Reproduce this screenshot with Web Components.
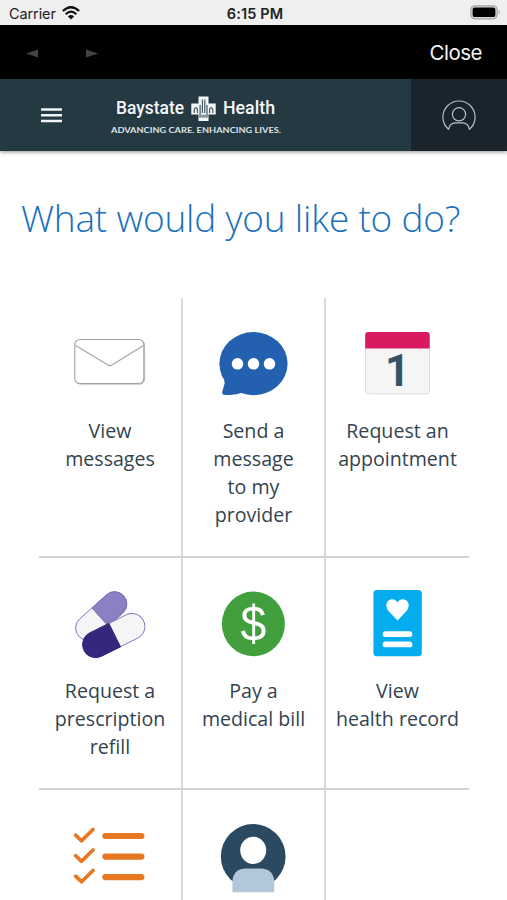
<!DOCTYPE html>
<html lang="en">
<head>
<meta charset="utf-8">
<meta name="viewport" content="width=device-width, initial-scale=1">
<title>Baystate Health</title>
<style>
    html {
        overflow: hidden;
    }

    body {
        margin: 0;
        height: 900px;
        overflow: hidden;
        background: #fff;
        color: #33434f;
        font-family: "Open Sans", sans-serif;
    }
</style>
</head>
<body>
<status-bar></status-bar>
<browser-bar>Close</browser-bar>
<site-header></site-header>
<page-title>What would you like to do?</page-title>
<action-grid>
    <action-tile>
        <svg slot="icon" viewBox="0 0 80 72" fill="#fff" stroke="#a3a3a3" stroke-width="1.1">
            <rect x="5.6" y="12.2" width="69" height="44" rx="5" stroke="#c4c4c4"/>
            <rect x="4.8" y="11.5" width="69" height="44" rx="5"/>
            <path d="M5.5 17.5 38.5 37.2Q40 38.1 41.5 37.2L73.6 17.5" fill="none"/>
        </svg>
        View<br>messages
    </action-tile>
    <action-tile>
        <svg slot="icon" viewBox="0.8 0 80 72" fill="#2361b0">
            <ellipse cx="40.3" cy="35.6" rx="34.1" ry="31.6"/>
            <path d="M8 47Q12.5 52 11 57L9 64Q8.6 67 12 67Q22 67 29 64.4L36 66 30 45Z"/>
            <g fill="#fff">
                <circle cx="24.3" cy="35.8" r="5.8"/>
                <circle cx="40.3" cy="35.8" r="5.8"/>
                <circle cx="56.3" cy="35.8" r="5.8"/>
            </g>
        </svg>
        Send a<br>message<br>to my<br>provider
    </action-tile>
    <action-tile>
        <svg slot="icon" viewBox="0.8 0 80 72">
            <rect x="8.3" y="4.5" width="64" height="61.3" rx="3" fill="#f5f5f5" stroke="#dcdcdc"/>
            <path d="M8 20.6V7Q8 4 11 4H69.5Q72.5 4 72.5 7V20.6Z" fill="#da1a60"/>
            <text x="40.4" y="58.2" text-anchor="middle" font-family="Roboto, sans-serif" font-weight="700" font-size="43.5" fill="#34536b">1</text>
        </svg>
        Request an<br>appointment
    </action-tile>
    <action-tile>
        <svg slot="icon" viewBox="0 0 80 72">
            <g transform="translate(31.2 28) rotate(-42)" stroke="#7d70b8" stroke-width=".9">
                <rect x="-30.2" y="-12.2" width="60.4" height="24.4" rx="12.2" fill="#f5f5f7"/>
                <path d="M-1.5-12.2H18A12.2 12.2 0 0 1 18 12.2H-1.5Z" fill="#8a81c5"/>
            </g>
            <g transform="translate(43.8 47.5) rotate(-26.5)" stroke="#7d70b8" stroke-width=".9">
                <rect x="-33.2" y="-13" width="66.4" height="26" rx="13" fill="#f5f5f7"/>
                <path d="M1-13H-20.2A13 13 0 0 0-20.2 13H1Z" fill="#34277d" stroke="#34277d"/>
            </g>
        </svg>
        Request a<br>prescription<br>refill
    </action-tile>
    <action-tile>
        <svg slot="icon" viewBox="0.8 0 80 72">
            <ellipse cx="40.2" cy="35.9" rx="31.5" ry="32.4" fill="#41a03d"/>
            <text transform="translate(40.3 52.6) scale(.93 1)" text-anchor="middle" font-family="Liberation Sans, sans-serif" font-size="50" fill="#fff">$</text>
        </svg>
        Pay a<br>medical bill
    </action-tile>
    <action-tile>
        <svg slot="icon" viewBox="0.8 0 80 72">
            <rect x="16.2" y="2" width="48.4" height="66.2" rx="3.5" fill="#05adee"/>
            <path d="M40.3 32.6 31.3 23Q27.6 18 30 14C32.6 10 38 10.5 40.3 14.4C42.6 10.5 48 10 50.6 14Q53 18 49.3 23Z" fill="#fff"/>
            <path d="M28.3 46.1H52.3M28.3 56.4H52.3" stroke="#fff" stroke-width="5.8" stroke-linecap="round"/>
        </svg>
        View<br>health record
    </action-tile>
    <action-tile>
        <svg slot="icon" viewBox="0 0 80 72" fill="none" stroke="#e87722" stroke-linecap="round" stroke-linejoin="round">
            <g stroke-width="3.7">
                <path d="M5.6 15.2 11.6 20.8 23 9.5"/>
                <path d="M5.6 35.7 11.6 41.3 23 30"/>
                <path d="M5.6 56.2 11.6 61.8 23 50.5"/>
            </g>
            <path d="M35.4 16H71.4M35.4 36.6H71.4M35.4 57.1H71.4" stroke-width="6.2"/>
        </svg>
    </action-tile>
    <action-tile>
        <svg slot="icon" viewBox="0.8 0 80 76">
            <circle cx="40" cy="36.4" r="32.4" fill="#2b4a61"/>
            <ellipse cx="40" cy="30.3" rx="13" ry="13.6" fill="#fff"/>
            <path d="M19.2 72.3V63Q19.2 48.5 33 48.5H47Q61 48.5 61 63V72.3Z" fill="#b2c8da"/>
        </svg>
    </action-tile>
    <action-tile></action-tile>
</action-grid>

<script>
class StatusBar extends HTMLElement {
    connectedCallback() {
        this.attachShadow({ mode: 'open' });
        this.shadowRoot.innerHTML = `
            <style>
                :host {
                    display: grid;
                    grid-template-columns: 1fr auto 1fr;
                    align-items: center;
                    height: 25px;
                    padding: 2px 6px 0 9px;
                    box-sizing: border-box;
                    background: #efefef;
                    color: #222;
                    font: 14.5px/23px Inter, sans-serif;
                }

                .carrier {
                    display: flex;
                    align-items: center;
                    gap: 6px;
                    letter-spacing: -0.1px;
                }

                .carrier svg {
                    margin-top: -2px;
                }

                .time {
                    font-weight: 600;
                    font-size: 14.5px;
                    letter-spacing: 0.15px;
                }

                .battery {
                    justify-self: end;
                    margin-top: -2px;
                }

                svg {
                    display: block;
                }
            </style>
            <div class="carrier">
                <span>Carrier</span>
                <svg width="18" height="14" viewBox="0 0 18 14" fill="none" stroke="#111" stroke-width="2.3">
                    <path d="M.9 5Q9-2.6 17.1 5"/>
                    <path d="M3.7 8.2Q9 3 14.3 8.2"/>
                    <path d="M9 13.5 5.9 10.4Q9 7.7 12.1 10.4Z" fill="#111" stroke="none"/>
                </svg>
            </div>
            <div class="time">6:15 PM</div>
            <svg class="battery" width="31" height="15" viewBox="0 0 31 15">
                <rect x=".8" y=".8" width="26.4" height="13" rx="4" fill="#d5d5d5" stroke="#a5a5a5" stroke-width="1.2"/>
                <rect x="2.6" y="2.5" width="22.8" height="9.6" rx="2.2" fill="#000"/>
                <path d="M28.6 5Q31 7.3 28.6 9.6Z" fill="#a5a5a5"/>
            </svg>
        `;
    }
}

class BrowserBar extends HTMLElement {
    connectedCallback() {
        this.attachShadow({ mode: 'open' });
        this.shadowRoot.innerHTML = `
            <style>
                :host {
                    display: flex;
                    align-items: center;
                    justify-content: space-between;
                    height: 54px;
                    padding: 0 25px 0 26px;
                    background: #000;
                    color: #f4f4f4;
                    font: 20.5px Inter, sans-serif;
                    letter-spacing: -0.5px;
                }

                .arrows {
                    display: flex;
                    gap: 48px;
                    padding-top: 3px;
                }

                .arrows svg {
                    display: block;
                    fill: #444;
                }
            </style>
            <div class="arrows">
                <svg width="12" height="9" viewBox="0 0 12 9"><path d="M0 4.5 12 .5V8.5Z"/></svg>
                <svg width="12" height="9" viewBox="0 0 12 9"><path d="M12 4.5 0 .5V8.5Z"/></svg>
            </div>
            <slot></slot>
        `;
    }
}

class SiteHeader extends HTMLElement {
    connectedCallback() {
        this.attachShadow({ mode: 'open' });
        this.shadowRoot.innerHTML = `
            <style>
                :host {
                    display: flex;
                    height: 72px;
                    background: #253943;
                    box-shadow: 0 1px 4px rgba(0, 0, 0, 0.45);
                }

                .menu {
                    width: 21px;
                    height: 15px;
                    margin: 28.5px 0 0 41px;
                }

                .logo {
                    margin: 11px 0 0 49px;
                }

                .account {
                    display: flex;
                    align-items: center;
                    justify-content: center;
                    width: 96px;
                    margin-left: auto;
                    padding-top: 4px;
                    box-sizing: border-box;
                    background: #19242d;
                }
            </style>
            <svg class="menu" viewBox="0 0 21 15" stroke="#f1f4f5" stroke-width="2.5">
                <path d="M0 1.5H21M0 7.3H21M0 13.1H21"/>
            </svg>
            <svg class="logo" width="180" height="50" viewBox="3 0 180 50" fill="#f4f7f8" font-family="Roboto, sans-serif">
                <text x="8" y="24" font-size="18" font-weight="500" textLength="68" lengthAdjust="spacingAndGlyphs">Baystate</text>
                <text x="115" y="24" font-size="18" font-weight="500" textLength="52" lengthAdjust="spacingAndGlyphs">Health</text>
                <path d="M83.3 13.5H90.5V6.5H100.5V13.5H107.7V24.5H100.5V31H90.5V24.5H83.3Z"/>
                <path d="M86.2 23V19.5Q87.8 16 89.4 19V23M104.8 23V19.5Q103.2 16 101.6 19V23M92.1 25V15M94.4 23V9.5M96.8 23V9.5M99 25V15" fill="none" stroke="#415762" stroke-width="1.2"/>
                <path d="M90.5 26.2H100.5" stroke="#8797a0" stroke-width="3"/>
                <text x="3" y="43.3" font-family="Lato, sans-serif" font-size="7.4" font-weight="700" fill="#dde3e6" textLength="170" lengthAdjust="spacingAndGlyphs">ADVANCING CARE. ENHANCING LIVES.</text>
            </svg>
            <div class="account">
                <svg width="36" height="36" viewBox="0 0 36 36" fill="none" stroke="#b7bec3" stroke-width="1.2" stroke-linejoin="round">
                    <path d="M7.5 30.3A16.1 16.1 0 1 1 28.5 30.3Q27 23.8 21.7 23.8H14.3Q9 23.8 7.5 30.3Z"/>
                    <circle cx="18" cy="15.3" r="6.6"/>
                </svg>
            </div>
        `;
    }
}

class PageTitle extends HTMLElement {
    connectedCallback() {
        this.attachShadow({ mode: 'open' });
        this.shadowRoot.innerHTML = `
            <style>
                :host {
                    display: block;
                    padding: 42px 0 55px 21px;
                }

                h1 {
                    margin: 0;
                    color: #1a70bd;
                    font-weight: 300;
                    font-size: 37px;
                    line-height: 50px;
                    letter-spacing: -0.2px;
                    white-space: nowrap;
                }
            </style>
            <h1><slot></slot></h1>
        `;
    }
}

class ActionGrid extends HTMLElement {
    connectedCallback() {
        this.attachShadow({ mode: 'open' });
        this.shadowRoot.innerHTML = `
            <style>
                :host {
                    display: grid;
                    grid-template-columns: 144px 143px 143px;
                    margin-left: 39px;
                }

                ::slotted(action-tile) {
                    border-right: 2px solid #d9d9d9;
                    border-bottom: 2px solid #d2d2d2;
                }

                ::slotted(action-tile:nth-child(3n)) {
                    border-right: 0;
                }

                ::slotted(action-tile:nth-child(n + 7)) {
                    height: 110px;
                    box-sizing: border-box;
                    padding-bottom: 0;
                    border-bottom: 0;
                }
            </style>
            <slot></slot>
        `;
    }
}

class ActionTile extends HTMLElement {
    connectedCallback() {
        this.attachShadow({ mode: 'open' });
        this.shadowRoot.innerHTML = `
            <style>
                :host {
                    display: flex;
                    flex-direction: column;
                    align-items: center;
                    padding: 30px 0 27px;
                }

                ::slotted(svg) {
                    display: block;
                    width: 80px;
                }

                .icon {
                    height: 89px;
                }

                .label {
                    font-size: 19.6px;
                    line-height: 28px;
                    text-align: center;
                    white-space: nowrap;
                }
            </style>
            <div class="icon"><slot name="icon"></slot></div>
            <div class="label"><slot></slot></div>
        `;
    }
}

customElements.define('status-bar', StatusBar);
customElements.define('browser-bar', BrowserBar);
customElements.define('site-header', SiteHeader);
customElements.define('page-title', PageTitle);
customElements.define('action-grid', ActionGrid);
customElements.define('action-tile', ActionTile);
</script>
</body>
</html>
